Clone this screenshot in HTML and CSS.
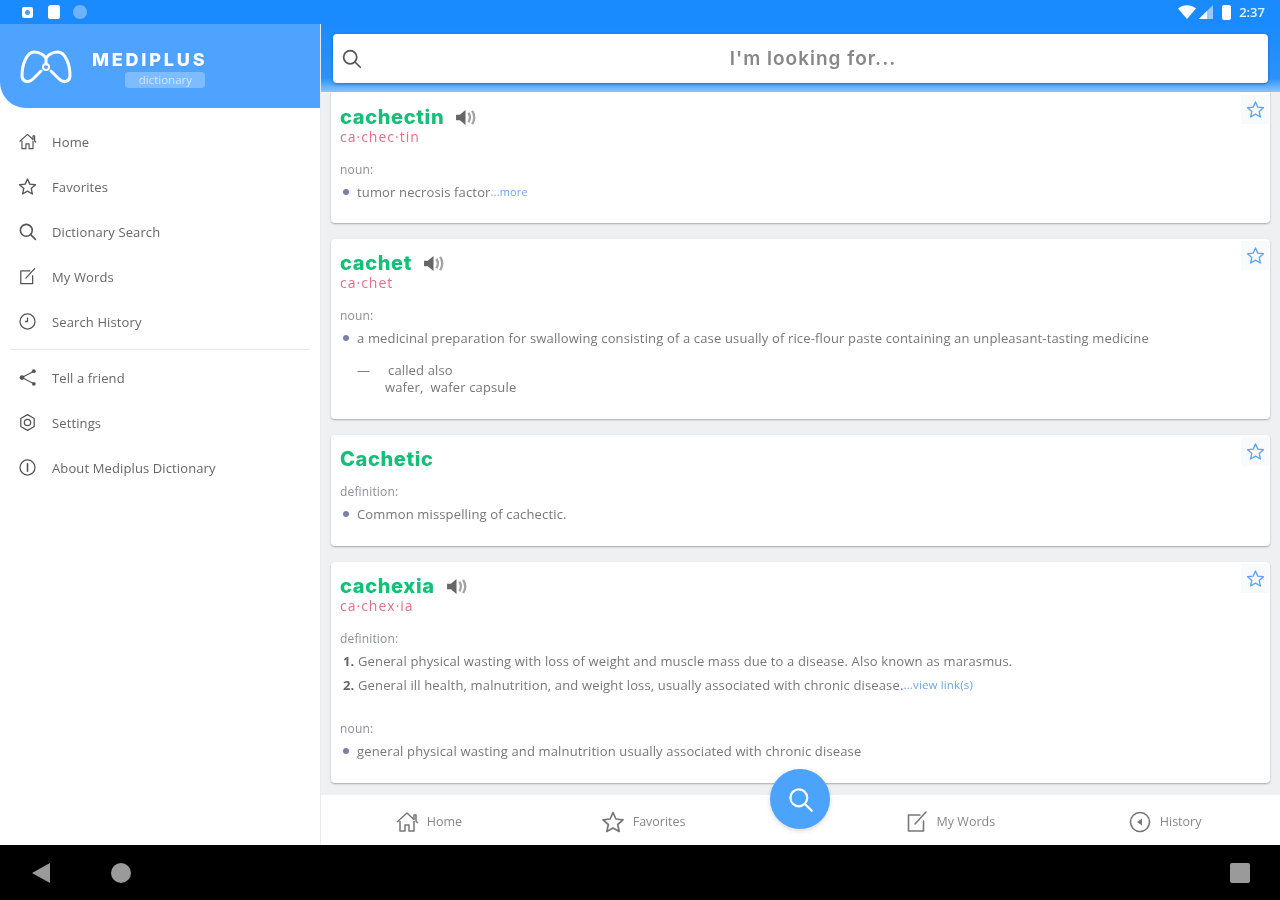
FILE: index.html
```html
<!DOCTYPE html>
<html lang="en">
<head>
  <meta charset="UTF-8" />
  <title>Mediplus Dictionary</title>
  <link rel="stylesheet" href="styles.css">
</head>
<body>

  <svg class="defs" width="0" height="0">
    <symbol id="i-home" viewBox="0 0 24 24"><path d="M2 12 12 3l7 6.500V5h2v6.300L23 13M5 11v10h5v-6h4v6h5V11" fill="none" stroke="currentColor" stroke-width="1.500" stroke-linejoin="round"/></symbol>
    <symbol id="i-star" viewBox="0 0 24 24"><path d="M12 2.500l2.900 6.500 7.100.8-5.300 4.700 1.500 7-6.200-3.600-6.200 3.600 1.500-7L2 9.800 9.100 9z" fill="none" stroke="currentColor" stroke-width="1.700" stroke-linejoin="round"/></symbol>
    <symbol id="i-search" viewBox="0 0 24 24"><circle cx="10.500" cy="10.500" r="7.500" fill="none" stroke="currentColor" stroke-width="2"/><path d="M16 16l6 6" stroke="currentColor" stroke-width="2" stroke-linecap="round"/></symbol>
    <symbol id="i-edit" viewBox="0 0 24 24"><path d="M15 5H3.500v16h15V11M10 14 21 2" fill="none" stroke="currentColor" stroke-width="1.600" stroke-linecap="round" stroke-linejoin="round"/></symbol>
    <symbol id="i-history" viewBox="0 0 24 24"><circle cx="12" cy="12" r="9.500" fill="none" stroke="currentColor" stroke-width="1.600"/><path d="M12 7v5h-3" fill="none" stroke="currentColor" stroke-width="1.600"/></symbol>
    <symbol id="i-back" viewBox="0 0 24 24"><circle cx="12" cy="12" r="9.500" fill="none" stroke="currentColor" stroke-width="1.600"/><path d="M14 8.500v7L9 12z" fill="currentColor"/></symbol>
    <symbol id="i-share" viewBox="0 0 24 24"><path d="M20 4 5 12l15 8" fill="none" stroke="currentColor" stroke-width="1.500"/><circle cx="20" cy="4" r="2.400" fill="currentColor"/><circle cx="5" cy="12" r="3" fill="currentColor"/><circle cx="20" cy="20" r="2.400" fill="currentColor"/></symbol>
    <symbol id="i-gear" viewBox="0 0 24 24"><path d="M12 2l8.500 5v10L12 22l-8.500-5V7z" fill="none" stroke="currentColor" stroke-width="1.600" stroke-linejoin="round"/><circle cx="12" cy="12" r="4" fill="none" stroke="currentColor" stroke-width="1.600"/></symbol>
    <symbol id="i-info" viewBox="0 0 24 24"><circle cx="12" cy="12" r="9.500" fill="none" stroke="currentColor" stroke-width="1.600"/><path d="M12 6.500v11" stroke="currentColor" stroke-width="2"/></symbol>
    <symbol id="i-sound" viewBox="0 0 22 18"><path d="M1 6h4l6-5v16l-6-5H1z" fill="currentColor"/><path d="M14 4c2 3 2 7 0 10M18 2c3 4 3 10 0 14" fill="none" stroke="currentColor" stroke-width="2.500" opacity=".6"/></symbol>
  </svg>

  <div class="statusbar">
    <div class="status-left">
      <span class="note-icon"></span>
      <span class="sd-icon"></span>
      <span class="dot-icon"></span>
    </div>
    <div class="status-right">
      <svg class="wifi" viewBox="0 0 18 14"><path d="M0 3.500C5-1 13-1 18 3.500L9 14z" fill="#fff"/></svg>
      <svg class="signal" viewBox="0 0 14 14"><path d="M14 0v14H0z" fill="#fff" opacity=".55"/><path d="M8 6v8H0z" fill="#fff"/></svg>
      <span class="battery"></span>
      <span class="clock">2:37</span>
    </div>
  </div>

  <div class="app">
    <aside class="sidebar">
      <div class="brand">
        <svg class="logo" viewBox="0 0 52 36">
          <path d="M21 22l-8 8C8 35 2 32 2 27 2 15 7 3 14 3c5 0 9 2 12 6 3-4 7-6 12-6 7 0 12 12 12 24 0 5-6 8-11 3l-8-8M26 9v6" fill="none" stroke="#fff" stroke-width="3" stroke-linecap="round" stroke-linejoin="round"/>
          <circle cx="26" cy="18" r="3" fill="none" stroke="#fff" stroke-width="2"/>
        </svg>
        <div class="brand-text">
          <div class="brand-name">MEDIPLUS</div>
          <div class="brand-tag">dictionary</div>
        </div>
      </div>

      <nav class="menu">
        <a class="menu-item"><svg><use href="#i-home"/></svg>Home</a>
        <a class="menu-item"><svg><use href="#i-star"/></svg>Favorites</a>
        <a class="menu-item"><svg><use href="#i-search"/></svg>Dictionary Search</a>
        <a class="menu-item"><svg><use href="#i-edit"/></svg>My Words</a>
        <a class="menu-item"><svg><use href="#i-history"/></svg>Search History</a>
        <div class="menu-line"></div>
        <a class="menu-item"><svg><use href="#i-share"/></svg>Tell a friend</a>
        <a class="menu-item"><svg><use href="#i-gear"/></svg>Settings</a>
        <a class="menu-item"><svg><use href="#i-info"/></svg>About Mediplus Dictionary</a>
      </nav>
    </aside>

    <main class="main">
      <div class="searchband">
        <div class="searchbox">
          <svg class="searchbox-icon"><use href="#i-search"/></svg>
          <span class="searchbox-text">I'm looking for...</span>
        </div>
      </div>

      <div class="results">
        <div class="card card-first">
          <button class="fav"><svg><use href="#i-star"/></svg></button>
          <div class="word">cachectin <svg class="sound"><use href="#i-sound"/></svg></div>
          <div class="syll">ca·chec·tin</div>
          <div class="kind">noun:</div>
          <div class="def"><span class="bullet"></span>tumor necrosis factor<a class="more">...more</a></div>
        </div>

        <div class="card">
          <button class="fav"><svg><use href="#i-star"/></svg></button>
          <div class="word">cachet <svg class="sound"><use href="#i-sound"/></svg></div>
          <div class="syll">ca·chet</div>
          <div class="kind">noun:</div>
          <div class="def"><span class="bullet"></span>a medicinal preparation for swallowing consisting of a case usually of rice-flour paste containing an unpleasant-tasting medicine</div>
          <div class="also">
            <div class="also-line"><span>—</span>called also</div>
            <div class="also-words">wafer,&nbsp; wafer capsule</div>
          </div>
        </div>

        <div class="card">
          <button class="fav"><svg><use href="#i-star"/></svg></button>
          <div class="word">Cachetic</div>
          <div class="kind kind-nosyll">definition:</div>
          <div class="def"><span class="bullet"></span>Common misspelling of cachectic.</div>
        </div>

        <div class="card">
          <button class="fav"><svg><use href="#i-star"/></svg></button>
          <div class="word">cachexia <svg class="sound"><use href="#i-sound"/></svg></div>
          <div class="syll">ca·chex·ia</div>
          <div class="kind">definition:</div>
          <div class="def def-num"><b>1.</b>General physical wasting with loss of weight and muscle mass due to a disease. Also known as marasmus.</div>
          <div class="def def-num"><b>2.</b>General ill health, malnutrition, and weight loss, usually associated with chronic disease.<a class="more more-link">...view link(s)</a></div>
          <div class="kind kind-second">noun:</div>
          <div class="def"><span class="bullet"></span>general physical wasting and malnutrition usually associated with chronic disease</div>
        </div>
      </div>

      <div class="tabs">
        <a class="tab"><svg><use href="#i-home"/></svg>Home</a>
        <a class="tab"><svg><use href="#i-star"/></svg>Favorites</a>
        <div class="tab-gap"></div>
        <a class="tab"><svg><use href="#i-edit"/></svg>My Words</a>
        <a class="tab"><svg><use href="#i-back"/></svg>History</a>
      </div>
      <button class="fab"><svg><use href="#i-search"/></svg></button>
    </main>
  </div>

  <div class="navbar">
    <svg class="nav-back" viewBox="0 0 18 20"><path d="M18 0v20L0 10z" fill="#9a9a9a"/></svg>
    <span class="nav-home"></span>
    <span class="nav-recent"></span>
  </div>

</body>
</html>
```

FILE: styles.css
```css
* {
  box-sizing: border-box;
}

html, body {
  height: 100%;
}

body {
  margin: 0;
  display: flex;
  flex-direction: column;
  overflow: hidden;
  background: #fff;
  color: #666;
  font-family: "Open Sans", "Noto Sans", Arial, sans-serif;
  filter: blur(.5px);
}

.defs {
  position: absolute;
}

/* status bar */
.statusbar {
  height: 24px;
  flex: none;
  display: flex;
  align-items: center;
  justify-content: space-between;
  padding: 0 15px 0 22px;
  background: #1a8bff;
}

.status-left, .status-right {
  display: flex;
  align-items: center;
}

.note-icon {
  width: 11px;
  height: 11px;
  border-radius: 2px;
  background: radial-gradient(circle, #4a9ff5 2px, #fff 3px);
  margin-right: 15px;
}

.sd-icon {
  width: 12px;
  height: 14px;
  border-radius: 3px 2px 2px 2px;
  background: #fff;
  margin-right: 13px;
}

.dot-icon {
  width: 14px;
  height: 14px;
  border-radius: 50%;
  background: #6db2fb;
}

.wifi {
  width: 18px;
  height: 14px;
  margin-right: 3px;
}

.signal {
  width: 14px;
  height: 14px;
  margin-right: 9px;
}

.battery {
  width: 9px;
  height: 15px;
  border-radius: 2px;
  background: #fff;
  margin-right: 8px;
}

.clock {
  color: #e6f2ff;
  font-size: 13px;
  font-weight: 600;
}

.app {
  flex: 1;
  display: flex;
  min-height: 0;
}

/* drawer */
.sidebar {
  width: 321px;
  flex: none;
  border-right: 1px solid #e8eaec;
  background: #fff;
}

.brand {
  height: 84px;
  display: flex;
  align-items: center;
  padding: 0 0 3px 20px;
  background: #4da3ff;
  border-bottom-left-radius: 26px;
}

.logo {
  width: 52px;
  height: 36px;
  margin: 5px 20px 0 0;
}

.brand-text {
  display: flex;
  flex-direction: column;
  align-items: flex-end;
  padding-top: 9px;
}

.brand-name {
  color: #fff;
  font-family: "Inter", sans-serif;
  font-size: 18px;
  font-weight: 800;
  letter-spacing: 2.800px;
  line-height: 20px;
  margin-right: -2px;
}

.brand-tag {
  width: 80px;
  height: 16px;
  margin-top: 2px;
  border-radius: 4px;
  background: #7dbcff;
  color: #cfe6ff;
  font-size: 11.500px;
  line-height: 16px;
  text-align: center;
}

.menu {
  padding-top: 11px;
}

.menu-item {
  height: 45px;
  display: flex;
  align-items: center;
  padding-left: 18px;
  color: #666;
  font-size: 13px;
  letter-spacing: .12px;
}

.menu-item svg {
  width: 19px;
  height: 19px;
  margin-right: 15px;
  color: #555;
}

.menu-line {
  height: 1px;
  margin: 5px 10px;
  background: #e6e6e6;
}

/* main column */
.main {
  flex: 1;
  min-width: 0;
  display: flex;
  flex-direction: column;
  position: relative;
  background: #eef0f2;
}

.searchband {
  height: 68px;
  flex: none;
  padding: 10px 12px 9px;
  background: linear-gradient(#1a8bff, #2a93fb 80%, #8cc4fb);
}

.searchbox {
  height: 49px;
  display: flex;
  align-items: center;
  padding: 0 8px;
  border-radius: 4px;
  background: #fff;
  box-shadow: 0 1px 3px rgba(0, 50, 120, .5);
}

.searchbox-icon {
  width: 21px;
  height: 21px;
  flex: none;
  color: #555;
}

.searchbox-text {
  flex: 1;
  padding-left: 4px;
  color: #888;
  font-family: "Inter", sans-serif;
  font-size: 19px;
  font-weight: 600;
  letter-spacing: 1px;
  text-align: center;
}

.results {
  flex: 1;
  min-height: 0;
  display: flex;
  flex-direction: column;
  gap: 16px;
  padding: 0 10px;
}

.card {
  position: relative;
  padding: 15px 10px 21px 9px;
  border-radius: 4px;
  background: #fff;
  box-shadow: 0 1px 2px rgba(0, 0, 0, .3);
}

.card-first {
  padding-top: 16px;
  padding-bottom: 20px;
  border-radius: 0 0 4px 4px;
}

.fav {
  position: absolute;
  top: 2px;
  right: 1px;
  width: 28px;
  height: 29px;
  display: flex;
  align-items: center;
  justify-content: center;
  padding: 0;
  border: none;
  background: #f9fafb;
}

.card-first .fav {
  top: 3px;
}

.fav svg {
  width: 19px;
  height: 19px;
  color: #5aa5f5;
}

.word {
  height: 19px;
  display: flex;
  align-items: center;
  gap: 11px;
  color: #14bf78;
  font-family: "Inter", sans-serif;
  font-size: 20px;
  font-weight: 800;
  letter-spacing: .65px;
  line-height: 19px;
}

.sound {
  width: 21px;
  height: 17px;
  color: #666;
}

.syll {
  height: 18px;
  margin-top: 1px;
  color: #e2708a;
  font-size: 14px;
  letter-spacing: 1px;
  line-height: 18px;
}

.kind {
  margin-top: 15px;
  color: #8c8f99;
  font-size: 12px;
  letter-spacing: .15px;
  line-height: 18px;
}

.kind-nosyll {
  margin-top: 14px;
}

.kind-second {
  margin-top: 24px;
}

.def {
  display: flex;
  align-items: center;
  margin-top: 2px;
  color: #777;
  font-size: 13px;
  letter-spacing: .15px;
  line-height: 22px;
}

.def-num b {
  width: 18px;
  flex: none;
  padding-left: 3px;
  color: #666;
}

.bullet {
  width: 6px;
  height: 6px;
  flex: none;
  margin: 0 8px 0 3px;
  border-radius: 50%;
  background: #7b7fa3;
}

.more {
  color: #6ba5f0;
  font-size: 11px;
}

.more-link {
  font-size: 11.500px;
}

.also {
  margin: 13px 0 0 17px;
  padding-bottom: 2px;
  color: #777;
  font-size: 13px;
  letter-spacing: .15px;
  line-height: 17px;
}

.also-line {
  display: flex;
}

.also-line span {
  width: 31px;
}

.also-words {
  padding-left: 28px;
}

/* bottom tabs */
.tabs {
  height: 50px;
  flex: none;
  display: flex;
  align-items: center;
  padding: 3px 8px 0 0;
  background: #fff;
}

.tab {
  flex: 1;
  display: flex;
  align-items: center;
  justify-content: center;
  gap: 8px;
  color: #888;
  font-size: 12.500px;
}

.tab svg {
  width: 24px;
  height: 24px;
  color: #777;
}

.tab-gap {
  width: 92px;
  flex: none;
}

.fab {
  position: absolute;
  left: 449px;
  bottom: 16px;
  width: 60px;
  height: 60px;
  display: flex;
  align-items: center;
  justify-content: center;
  padding: 0;
  border: none;
  border-radius: 50%;
  background: #4ba3fb;
  box-shadow: 0 2px 5px rgba(0, 0, 0, .15);
}

.fab svg {
  width: 27px;
  height: 27px;
  color: #fff;
}

/* android nav */
.navbar {
  height: 55px;
  flex: none;
  display: flex;
  align-items: center;
  padding: 0 30px 0 32px;
  background: #000;
}

.nav-back {
  width: 18px;
  height: 20px;
  margin-right: 61px;
}

.nav-home {
  width: 20px;
  height: 20px;
  border-radius: 50%;
  background: #9a9a9a;
}

.nav-recent {
  width: 20px;
  height: 20px;
  margin-left: auto;
  border-radius: 2px;
  background: #9a9a9a;
}
```
